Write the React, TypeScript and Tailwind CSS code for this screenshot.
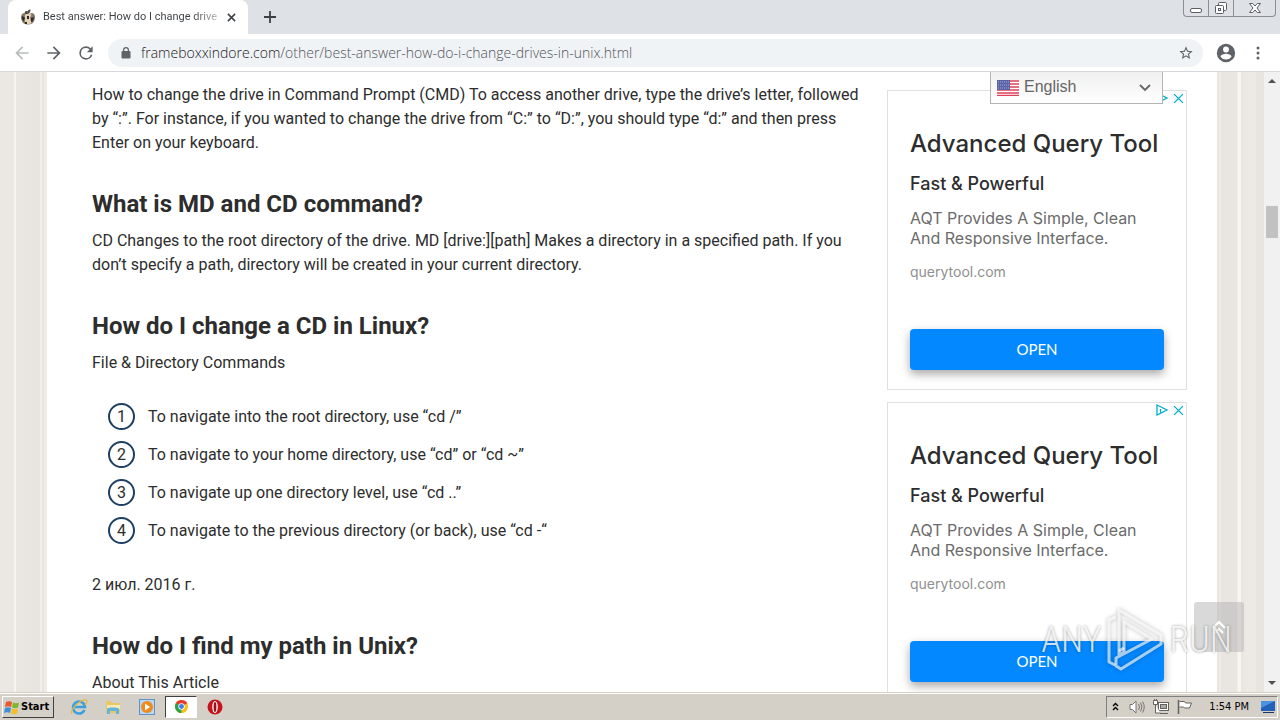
import type { ReactNode } from 'react'

function Tab() {
  return (
    <div className="flex h-[34px] w-60 items-center rounded-t-lg bg-white px-3">
      <svg viewBox="0 0 16 16" className="size-4 shrink-0">
        <path d="M2 5C5 3 6 5 8 5s4-2 6 0c1.500 2 1 4 .5 6-1 3-3 4.500-6.500 4.500S2.500 14 1.500 11C.8 9 .8 7 2 5z" fill="#857666" />
        <path d="M5 5.500c2-1 5-1 6.500 0L10 9l1.500 5c-2 1.500-4.500 1.500-6 .5L4.500 11z" fill="#e2d2b4" />
        <path d="M2 7l3 1.500-1 4L2 10zM11 9l3-1-1 4-2 1zM7 7h2v3H7zM5 13h2v2H5z" fill="#2d2a30" />
        <path d="M5 5C4 2.500 6 1.500 7.500 2.500 8 1 9 .5 10.500.5c.2 2-1 3.500-2.500 4.500z" fill="#55504a" />
      </svg>
      <span className="ml-[7px] w-[176px] overflow-hidden whitespace-nowrap bg-linear-to-r from-[#3c4043] from-85% to-[#3c4043]/30 bg-clip-text font-[Roboto,sans-serif] text-[11px] text-transparent">
        Best answer: How do I change drive
      </span>
      <button aria-label="Close tab" className="ml-2 shrink-0">
        <svg viewBox="0 0 10 10" className="size-[9px]">
          <path d="M1 1l8 8M9 1L1 9" stroke="#3c4043" strokeWidth="1.700" />
        </svg>
      </button>
    </div>
  )
}

function WindowButtons() {
  return (
    <div className="ml-auto flex h-[17px] self-start rounded-b border border-t-0 border-[#8b8e94]">
      <button aria-label="Minimize" className="flex w-[25px] items-center justify-center border-r border-[#8b8e94]">
        <svg viewBox="0 0 12 12" className="size-3">
          <rect x=".5" y="6.500" width="11" height="4" rx="1.500" fill="#fff" stroke="#5a5e66" />
        </svg>
      </button>
      <button aria-label="Restore" className="flex w-[25px] items-center justify-center border-r border-[#8b8e94]">
        <svg viewBox="0 0 14 14" className="size-[14px]" fill="#fff" stroke="#5a5e66">
          <rect x="4.500" y="1.500" width="8" height="8" rx="1" />
          <rect x="1.500" y="4.500" width="8" height="8" rx="1" />
          <rect x="4.500" y="7.500" width="2" height="2" />
        </svg>
      </button>
      <button aria-label="Close" className="flex w-[41px] items-center justify-center">
        <svg viewBox="0 0 14 12" className="h-3 w-[14px]" fill="#fff" stroke="#5a5e66">
          <path d="M1.500 1.500h3.200L7 4l2.300-2.500h3.200L9 6l3.500 4.500H9.300L7 8l-2.300 2.500H1.500L5 6z" />
        </svg>
      </button>
    </div>
  )
}

function Toolbar() {
  return (
    <div className="flex h-[38px] shrink-0 items-center border-b border-[#d5d7da] bg-white px-3">
      <button aria-label="Back" className="mr-3">
        <svg viewBox="0 0 24 24" className="size-5" fill="#babcbe">
          <path d="M20 11H7.830l5.590-5.590L12 4l-8 8 8 8 1.410-1.410L7.830 13H20v-2z" />
        </svg>
      </button>
      <button aria-label="Forward" className="mr-3">
        <svg viewBox="0 0 24 24" className="size-5" fill="#5f6368">
          <path d="M12 4l-1.410 1.410L16.170 11H4v2h12.170l-5.580 5.590L12 20l8-8z" />
        </svg>
      </button>
      <button aria-label="Reload" className="mr-3">
        <svg viewBox="0 0 24 24" className="size-5" fill="#5f6368">
          <path d="M17.650 6.350A7.960 7.960 0 0 0 12 4a8 8 0 1 0 7.730 10h-2.080A6 6 0 1 1 12 6c1.660 0 3.140.690 4.220 1.780L13 11h7V4l-2.350 2.350z" />
        </svg>
      </button>
      <div className="flex h-7 min-w-0 flex-1 items-center rounded-full bg-[#f0f3f5] pr-[9px] pl-3">
        <svg viewBox="0 0 24 24" className="size-3 shrink-0" fill="#5f6368" aria-hidden="true">
          <path d="M19 8h-1V6A6 6 0 0 0 6 6v2H5a2 2 0 0 0-2 2v11a2 2 0 0 0 2 2h14a2 2 0 0 0 2-2V10a2 2 0 0 0-2-2zM8.500 6a3.500 3.500 0 0 1 7 0v2h-7z" />
        </svg>
        <a href="#" className="ml-[9px] truncate font-[Open_Sans,sans-serif] text-sm font-light text-[#50555a]">
          <span className="text-[#202124]">frameboxxindore.com</span>/other/best-answer-how-do-i-change-drives-in-unix.html
        </a>
        <button aria-label="Bookmark this page" className="ml-auto shrink-0">
          <svg viewBox="0 0 24 24" className="size-4" fill="#5f6368">
            <path d="M22 9.240l-7.190-.620L12 2 9.190 8.630 2 9.240l5.460 4.730L5.820 21 12 17.270 18.180 21l-1.630-7.030L22 9.240zM12 15.400l-3.760 2.270 1-4.280-3.320-2.880 4.380-.380L12 6.100l1.710 4.040 4.380.380-3.320 2.880 1 4.280L12 15.400z" />
          </svg>
        </button>
      </div>
      <button aria-label="Profile" className="ml-3">
        <svg viewBox="0 0 24 24" className="size-[22px]" fill="#5f6368">
          <path d="M12 2a10 10 0 1 0 0 20 10 10 0 0 0 0-20zm0 3a3.200 3.200 0 1 1 0 6.400A3.200 3.200 0 0 1 12 5zm0 14.200A7.200 7.200 0 0 1 6 16c.03-2 4-3.100 6-3.100s5.970 1.100 6 3.100a7.200 7.200 0 0 1-6 3.200z" />
        </svg>
      </button>
      <button aria-label="Menu" className="ml-[11px] px-2">
        <svg viewBox="0 0 4 14" className="h-[14px] w-1" fill="#5f6368">
          <circle cx="2" cy="2" r="1.500" />
          <circle cx="2" cy="7" r="1.500" />
          <circle cx="2" cy="12" r="1.500" />
        </svg>
      </button>
    </div>
  )
}

function Heading({ children }: { children: ReactNode }) {
  return <h2 className="mt-[34px] mb-[10px] text-2xl leading-[30px] font-bold text-[#2d2d2d]">{children}</h2>
}

const steps = [
  'To navigate into the root directory, use “cd /”',
  'To navigate to your home directory, use “cd” or “cd ~”',
  'To navigate up one directory level, use “cd ..”',
  'To navigate to the previous directory (or back), use “cd -“',
]

function Article() {
  return (
    <article className="min-w-0 flex-1 pt-[11px] font-[Roboto,sans-serif] text-base leading-6 text-[#2d2d2d]">
      <p>
        How to change the drive in Command Prompt (CMD) To access another drive, type the drive’s letter, followed by “:”.
        For instance, if you wanted to change the drive from “C:” to “D:”, you should type “d:” and then press Enter on
        your keyboard.
      </p>
      <Heading>What is MD and CD command?</Heading>
      <p>
        CD Changes to the root directory of the drive. MD [drive:][path] Makes a directory in a specified path. If you
        don’t specify a path, directory will be created in your current directory.
      </p>
      <Heading>How do I change a CD in Linux?</Heading>
      <p>File &amp; Directory Commands</p>
      <ol className="mt-7 mb-[29px] flex flex-col gap-[11px] pl-4">
        {steps.map((step, i) => (
          <li key={step} className="flex items-center gap-[13px]">
            <span className="flex size-[27px] items-center justify-center rounded-full border-2 border-[#1d3f63]">
              {i + 1}
            </span>
            {step}
          </li>
        ))}
      </ol>
      <p>2 июл. 2016 г.</p>
      <Heading>How do I find my path in Unix?</Heading>
      <p>About This Article</p>
    </article>
  )
}

function Ad() {
  return (
    <section className="h-[300px] border border-[#dfdfdf] px-[22px] font-[Inter,sans-serif] text-[#2d2d2d]">
      <div className="-mr-5 flex h-[14px] items-center justify-end gap-[5px]">
        <svg viewBox="0 0 12 12" className="size-3" fill="none" stroke="#00aecd" strokeWidth="1.300" aria-hidden="true">
          <path d="M1 1l10 5-10 5zM4.500 5v3.500" />
        </svg>
        <button aria-label="Close ad">
          <svg viewBox="0 0 10 10" className="size-[11px]">
            <path d="M1 1l8 8M9 1L1 9" stroke="#00aecd" strokeWidth="1.200" />
          </svg>
        </button>
      </div>
      <h3 className="mt-[23px] text-2xl leading-8 font-medium whitespace-nowrap">Advanced Query Tool</h3>
      <h4 className="mt-3 text-lg leading-6 font-medium">Fast &amp; Powerful</h4>
      <p className="mt-3 text-base leading-5 text-[#6b6b6b]">
        AQT Provides A Simple, Clean And Responsive Interface.
      </p>
      <p className="mt-[14px] text-sm leading-5 text-[#8f8f8f]">querytool.com</p>
      <button className="mt-[47px] h-[41px] w-full rounded bg-[#0388ff] font-[Lato,sans-serif] text-[15px] text-white shadow-[0_4px_10px_rgba(0,0,0,0.35)]">
        OPEN
      </button>
    </section>
  )
}

function LanguageSelect() {
  return (
    <div className="absolute top-0 right-[101px] flex h-8 w-[173px] items-center border border-t-0 border-[#b5b5b5] bg-linear-to-b from-[#f0f0f0] to-white">
      <svg viewBox="0 0 22 16" className="pointer-events-none absolute left-[6px] h-4 w-[22px]">
        <rect width="22" height="16" fill="#fff" />
        <path d="M0 1h22M0 4h22M0 7h22M0 10h22M0 13h22M0 15.500h22" stroke="#e0405a" strokeWidth="1.500" />
        <rect width="13" height="10" fill="#5b62a6" />
        <path d="M1 2h12M1 5h12M1 8h12" stroke="#a9add4" strokeDasharray="1 1" />
      </svg>
      <select
        aria-label="Language"
        className="h-full w-full appearance-none pb-[2px] pl-[33px] font-[Liberation_Sans,sans-serif] text-base text-[#666]"
      >
        <option>English</option>
      </select>
      <svg viewBox="0 0 12 8" className="pointer-events-none absolute right-[11px] h-2 w-3">
        <path d="M1 1l5 5 5-5" fill="none" stroke="#666" strokeWidth="1.800" />
      </svg>
    </div>
  )
}

function Scrollbar() {
  return (
    <div className="flex w-4 shrink-0 flex-col items-center bg-[#f1f1f1] py-[7px]">
      <svg viewBox="0 0 8 4" className="h-1 w-2" fill="#505050">
        <path d="M0 4l4-4 4 4z" />
      </svg>
      <div className="mt-[123px] h-8 w-3 bg-[#c1c1c1]" />
      <svg viewBox="0 0 8 4" className="mt-auto h-1 w-2" fill="#505050">
        <path d="M0 0l4 4 4-4z" />
      </svg>
    </div>
  )
}

function Watermark() {
  return (
    <div className="pointer-events-none absolute right-8 bottom-5 flex h-16 items-center gap-[6px] font-[Roboto_Condensed,Roboto,sans-serif] text-[36px] leading-none font-light text-white/80">
      <span className="[text-shadow:0_0_3px_rgba(0,0,0,0.4)]">ANY</span>
      <svg
        viewBox="0 0 56 64"
        className="h-16 w-14 drop-shadow-[0_0_2px_rgba(0,0,0,0.4)]"
        fill="none"
        stroke="#fff"
        strokeOpacity=".65"
        strokeWidth="3"
        strokeLinejoin="round"
      >
        <path d="M12 2l42 25v9L14 61l-5-3v-8l36-19-28-17v30l-5 3z" />
        <path d="M9 9L2 12v42l6 3M17 40l-5 3" />
      </svg>
      <span className="[text-shadow:0_0_3px_rgba(0,0,0,0.4)]">RUN</span>
    </div>
  )
}

function Taskbar() {
  return (
    <footer className="flex h-7 shrink-0 items-center border-t border-[#d4d0c8] bg-[#d4d0c8] pl-[2px] font-[DejaVu_Sans_Condensed,sans-serif] text-[11px] leading-4 text-black shadow-[inset_0_1px_0_#fff]">
      <button className="flex h-[22px] w-[52px] items-center gap-[1px] border border-t-white border-r-[#404040] border-b-[#404040] border-l-white pl-px font-bold">
        <svg viewBox="0 0 16 16" className="size-4 shrink-0">
          <path d="M2 3c2-1 4-1 6 0L7 8C5 7 3 7 1 8z" fill="#e8562a" />
          <path d="M9 3.500c2 1 4 1 6 0l-1 5c-2 1-4 1-6 0z" fill="#7db72f" />
          <path d="M1 9c2-1 4-1 6 0l-1 5c-2-1-4-1-6 0z" fill="#3f8fd8" />
          <path d="M8 9.500c2 1 4 1 6 0l-1 5c-2 1-4 1-6 0z" fill="#f5bd28" />
        </svg>
        Start
      </button>
      <button aria-label="Internet Explorer" className="ml-4">
        <svg viewBox="0 0 18 18" className="size-[18px]" fill="none">
          <path d="M14.500 12A6 6 0 1 1 15 9H4" stroke="#3aa0e0" strokeWidth="2.600" />
          <path d="M2 16C-1 12 11 1 16 2c2 1 0 4-1 5" stroke="#e9b93a" strokeWidth="1.300" />
        </svg>
      </button>
      <button aria-label="Windows Explorer" className="ml-4">
        <svg viewBox="0 0 18 18" className="size-[18px]">
          <path d="M2 3h5l1 2h8v10H2z" fill="#e8c766" />
          <path d="M3 7h13v4H3z" fill="#f8eab4" />
          <path d="M3 16v-5c0-2 12-2 12 0v5h-3v-3H6v3z" fill="#62b4dc" />
        </svg>
      </button>
      <button aria-label="Media Player" className="ml-4">
        <svg viewBox="0 0 18 18" className="size-[18px]">
          <rect x="1.500" y="1.500" width="15" height="15" fill="#b7d7f2" stroke="#5e94c8" />
          <circle cx="9" cy="9" r="6" fill="#f18a1c" />
          <path d="M7 5.500l5 3.500-5 3.500z" fill="#fff" />
        </svg>
      </button>
      <button
        aria-label="Chrome"
        className="ml-[9px] flex h-[22px] w-8 items-center justify-center border border-t-[#404040] border-r-white border-b-white border-l-[#404040] bg-white"
      >
        <svg viewBox="0 0 16 16" className="size-[15px]">
          <circle cx="8" cy="8" r="7" fill="#fbc116" />
          <path d="M8 8L1.940 4.500a7 7 0 0 1 12.120 0z" fill="#e33b2e" />
          <path d="M8 8v7A7 7 0 0 1 1.940 4.500z" fill="#2ba24c" />
          <circle cx="8" cy="8" r="3.400" fill="#fff" />
          <circle cx="8" cy="8" r="2.600" fill="#3f7fea" />
        </svg>
      </button>
      <button aria-label="Opera" className="ml-[9px]">
        <svg viewBox="0 0 18 18" className="size-[18px]">
          <circle cx="9" cy="9" r="7.500" fill="#c4141c" />
          <ellipse cx="9" cy="9" rx="2.800" ry="6" fill="#fff" />
          <ellipse cx="9" cy="9" rx="1.400" ry="5" fill="#a01018" />
        </svg>
      </button>
      <div className="mr-[2px] ml-auto flex h-[22px] items-center border border-t-[#808080] border-r-white border-b-white border-l-[#808080] pr-px pl-[5px]">
        <svg viewBox="0 0 7 9" className="h-[9px] w-[7px]" fill="none" stroke="#000" strokeWidth="1.400">
          <path d="M1 4l2.500-2.500L6 4M1 8l2.500-2.500L6 8" />
        </svg>
        <svg viewBox="0 0 16 16" className="ml-[10px] size-4" fill="#fff" stroke="#77746e">
          <path d="M1 5.500h2.500L7 2v12l-3.500-3.500H1z" />
          <path d="M9.500 5q2 3 0 6M11.500 3.500q3 4.500 0 9M13.500 2.500q3.500 5.500 0 11" fill="none" />
        </svg>
        <svg viewBox="0 0 16 16" className="ml-2 size-4" fill="#fff" stroke="#66635e">
          <rect x="5.500" y="3.500" width="10" height="8" />
          <rect x="7.500" y="5.500" width="6" height="4" fill="#aaa" />
          <path d="M.5 1.500h4v4h-4zM2.500 6v8h5M7 14.500h8M1.500 0v2M3.500 0v2" />
        </svg>
        <svg viewBox="0 0 16 16" className="ml-2 size-4" fill="#fff" stroke="#66635e">
          <path d="M2.500 2.500h5l1 1.500h6l-2 5h-5l-1-1h-4" />
          <path d="M1.500 1v14" strokeWidth="1.500" />
        </svg>
        <time className="ml-4">1:54 PM</time>
        <svg viewBox="0 0 16 14" className="ml-[11px] h-[14px] w-4">
          <path d="M1 1h14v10H1z" fill="#2360b8" />
          <path d="M1 1h14L1 8z" fill="#4b92e0" />
          <path d="M3 12h11v1H3z" fill="#16376e" />
        </svg>
      </div>
    </footer>
  )
}

export default function App() {
  return (
    <div className="flex h-screen flex-col overflow-hidden bg-white">
      <header className="flex h-[34px] shrink-0 items-center bg-[#dee1e6] pr-1 pl-2">
        <Tab />
        <button aria-label="New tab" className="ml-4">
          <svg viewBox="0 0 12 12" className="size-3">
            <path d="M6 0v12M0 6h12" stroke="#3c4043" strokeWidth="1.800" />
          </svg>
        </button>
        <WindowButtons />
      </header>
      <Toolbar />
      <div className="relative flex min-h-0 flex-1">
        <div className="relative flex min-w-0 flex-1 overflow-hidden">
          <div className="w-[47px] shrink-0 bg-[linear-gradient(to_right,#ebe8e4_14px,#f6f4f0_14px,#f6f4f0_16px,#eae6e2_16px,#e8e4df_40px,#f2efeb_40px,#f2efeb_42px,#e8e4df_42px,#e8e4df_44px,#efece8_44px)]" />
          <main className="flex min-w-0 flex-1 items-start gap-[25px] bg-white pr-[30px] pl-[45px]">
            <Article />
            <aside className="flex w-[300px] shrink-0 flex-col gap-3 pt-[18px]">
              <Ad />
              <Ad />
            </aside>
          </main>
          <div className="w-[47px] shrink-0 bg-[linear-gradient(to_right,#e9e5e1_2px,#efece8_2px,#efece8_4px,#e9e5e0_4px,#e9e5e0_20px,#f8f6f1_21px,#f8f6f1_24px,#e9e5e0_24px,#edeae6_30px,#edeae6_39px,#e8e4e0_39px)]" />
          <LanguageSelect />
          <button
            aria-label="Back to top"
            className="absolute right-5 bottom-10 flex size-[50px] items-center justify-center rounded-[3px] bg-[#b4b4b4]/50"
          >
            <svg viewBox="0 0 14 14" className="size-[14px]" fill="none" stroke="#fff" strokeWidth="2">
              <path d="M1 8l6-6 6 6M3 13l4-4 4 4" />
            </svg>
          </button>
          <Watermark />
        </div>
        <Scrollbar />
      </div>
      <Taskbar />
    </div>
  )
}
